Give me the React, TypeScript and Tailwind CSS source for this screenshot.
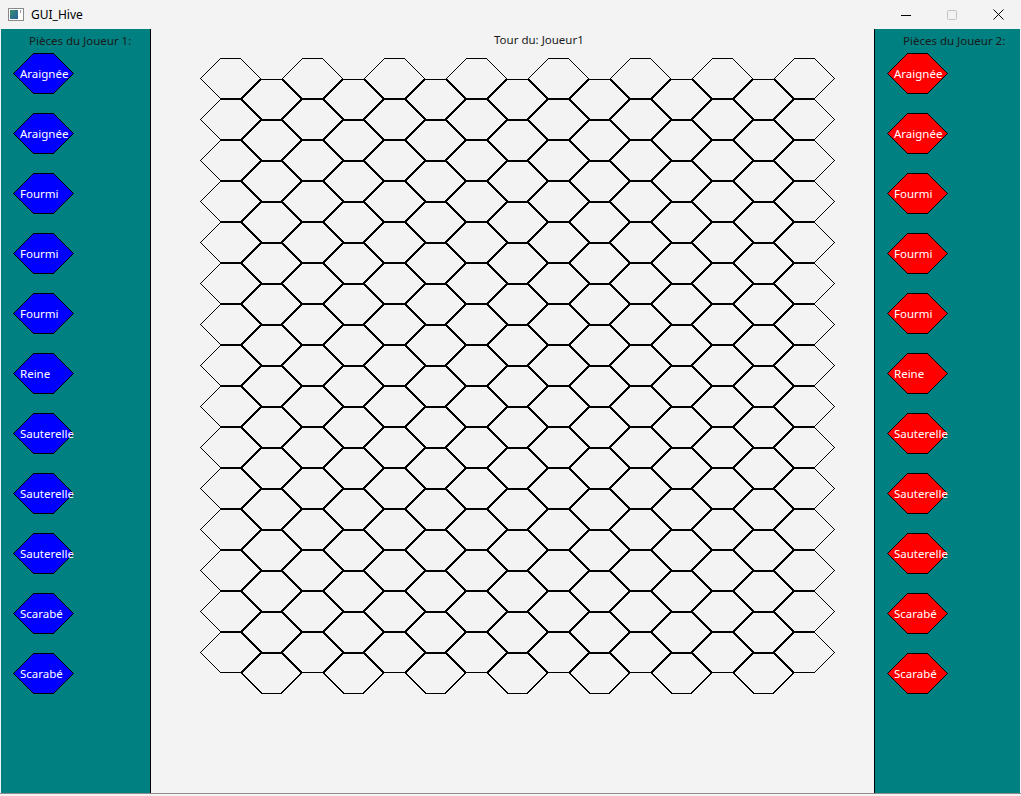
import React from "react";

const P1 = ["Araignée", "Araignée", "Fourmi", "Fourmi", "Fourmi", "Reine", "Sauterelle", "Sauterelle", "Sauterelle", "Scarabé", "Scarabé"];

function Piece({ label, color }: { label: string; color: string }) {
  return (
    <div className="relative w-[61px] h-[41px]">
      <svg className="absolute inset-0" width="61" height="41" shapeRendering="crispEdges">
        <polygon points="0.5,20.5 20.5,0.5 40.5,0.5 60.5,20.5 40.5,40.5 20.5,40.5" fill={color} stroke="#000" strokeWidth="1" />
      </svg>
      <div className="relative h-full flex items-center pl-[7px] text-white text-[11.5px] leading-[16px] whitespace-nowrap">{label}</div>
    </div>
  );
}

function Board() {
  const polys: React.ReactElement[] = [];
  for (let c = 0; c < 15; c++) {
    for (let r = 0; r < 15; r++) {
      const x = 49 + c * 41 + 0.5;
      const y = 7 + r * 41 + (c % 2 === 1 ? 20.5 : 0) + 0.5;
      const pts = [
        [x, y + 20],
        [x + 20, y],
        [x + 40, y],
        [x + 60, y + 20],
        [x + 40, y + 40],
        [x + 20, y + 40],
      ]
        .map((p) => p.join(","))
        .join(" ");
      polys.push(<polygon key={`${c}-${r}`} points={pts} fill="none" stroke="#000" strokeWidth="1" />);
    }
  }
  return (
    <svg width="723" height="660" shapeRendering="crispEdges" className="block">
      {polys}
    </svg>
  );
}

function Side({ title, color }: { title: string; color: string }) {
  return (
    <div className="flex flex-col h-full">
      <div className="pt-[4px] pl-[28px] text-[11.5px] leading-[16px] text-[#1a1a1a] whitespace-nowrap">{title}</div>
      <div className="flex flex-col gap-[19px] pl-[12px] pt-[4px]">
        {P1.map((p, i) => (
          <Piece key={i} label={p} color={color} />
        ))}
      </div>
    </div>
  );
}

export default function App() {
  return (
    <div
      className="w-[1021px] h-[796px] flex flex-col bg-[#f3f3f3] overflow-hidden"
      style={{ fontFamily: '"Noto Sans", "Open Sans", "Liberation Sans", sans-serif' }}
    >
      {/* Title bar */}
      <div className="h-[29px] flex items-center bg-[#f3f3f3] shrink-0">
        <div className="pl-[8px] pr-[7px] flex items-center">
          <svg width="16" height="13" viewBox="0 0 16 13">
            <defs>
              <linearGradient id="ig" x1="0" y1="0" x2="1" y2="1">
                <stop offset="0" stopColor="#3a8f6e" />
                <stop offset="1" stopColor="#2a5fa0" />
              </linearGradient>
            </defs>
            <rect x="0.5" y="0.5" width="15" height="12" fill="#fff" stroke="#8a8a8a" />
            <rect x="2" y="2" width="8" height="9" fill="url(#ig)" />
            <rect x="12" y="2" width="1" height="3" fill="#9a9a9a" />
          </svg>
        </div>
        <span className="text-[12px] leading-[16px] text-black">GUI_Hive</span>
        <div className="flex-1" />
        <div className="w-[46px] h-[29px] flex items-center justify-center">
          <svg width="10" height="10"><line x1="0" y1="5.5" x2="10" y2="5.5" stroke="#000" strokeWidth="1" /></svg>
        </div>
        <div className="w-[46px] h-[29px] flex items-center justify-center">
          <svg width="10" height="10"><rect x="0.5" y="0.5" width="9" height="9" rx="1" fill="none" stroke="#c4c4c4" /></svg>
        </div>
        <div className="w-[46px] h-[29px] flex items-center justify-center">
          <svg width="11" height="11"><path d="M0.5 0.5 L10.5 10.5 M10.5 0.5 L0.5 10.5" stroke="#000" strokeWidth="1" /></svg>
        </div>
      </div>
      {/* Content */}
      <div className="h-[764px] flex shrink-0 pl-[1px] pr-[1px]">
        <div className="w-[150px] bg-[#008080] border-r border-black shrink-0">
          <Side title="Pièces du Joueur 1:" color="#0000ff" />
        </div>
        <div className="flex-1 flex flex-col bg-[#f3f3f3]">
          <div className="h-[22px] pt-[3px] pl-[343px] text-[11.5px] leading-[16px] text-[#1a1a1a] whitespace-nowrap">Tour du: Joueur1</div>
          <Board />
        </div>
        <div className="w-[146px] bg-[#008080] border-l border-black shrink-0">
          <Side title="Pièces du Joueur 2:" color="#ff0000" />
        </div>
      </div>
      <div className="h-[1px] bg-[#8c8c8c] shrink-0" />
    </div>
  );
}
